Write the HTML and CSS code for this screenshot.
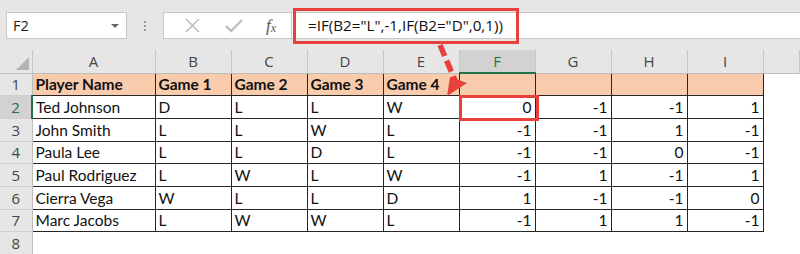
FILE: index.html
```html
<!DOCTYPE html>
<html lang="en">

<head>
    <meta charset="UTF-8">
    <title>IF formula</title>
    <link rel="stylesheet" href="styles.css">
</head>

<body>
    <div class="barra">
        <div class="nome">
            <span>F2</span>
            <span class="seta"></span>
        </div>
        <div class="pontos"><i></i><i></i><i></i></div>
        <div class="icones">
            <svg width="20" height="20" viewBox="0 0 20 20"><path d="M3 3 L16 16 M16 3 L3 16" stroke="#bfbfbf" stroke-width="1.6" fill="none"/></svg>
            <svg width="20" height="20" viewBox="0 0 20 20"><path d="M2 10 L7 15 L18 4" stroke="#bfbfbf" stroke-width="2.4" fill="none"/></svg>
            <span class="fx">f<sub>x</sub></span>
        </div>
        <div class="entrada">=IF(B2="L",-1,IF(B2="D",0,1))</div>
    </div>

    <table class="planilha">
        <tr class="letras">
            <td class="canto"><span></span></td>
            <td>A</td><td>B</td><td>C</td><td>D</td><td>E</td><td class="ativo">F</td><td>G</td><td>H</td><td>I</td><td class="resto"></td>
        </tr>
        <tr class="titulo">
            <td class="num">1</td>
            <td class="b">Player Name</td><td class="b">Game 1</td><td class="b">Game 2</td><td class="b">Game 3</td><td class="b">Game 4</td>
            <td class="b"></td><td class="b"></td><td class="b"></td><td class="b"></td><td class="vazio"></td>
        </tr>
        <tr>
            <td class="num ativo">2</td>
            <td class="b">Ted Johnson</td><td class="b">D</td><td class="b">L</td><td class="b">L</td><td class="b">W</td>
            <td class="b n sel">0</td><td class="b n">-1</td><td class="b n">-1</td><td class="b n">1</td><td class="vazio"></td>
        </tr>
        <tr>
            <td class="num">3</td>
            <td class="b">John Smith</td><td class="b">L</td><td class="b">L</td><td class="b">W</td><td class="b">L</td>
            <td class="b n">-1</td><td class="b n">-1</td><td class="b n">1</td><td class="b n">-1</td><td class="vazio"></td>
        </tr>
        <tr>
            <td class="num">4</td>
            <td class="b">Paula Lee</td><td class="b">L</td><td class="b">L</td><td class="b">D</td><td class="b">L</td>
            <td class="b n">-1</td><td class="b n">-1</td><td class="b n">0</td><td class="b n">-1</td><td class="vazio"></td>
        </tr>
        <tr>
            <td class="num">5</td>
            <td class="b">Paul Rodriguez</td><td class="b">L</td><td class="b">W</td><td class="b">L</td><td class="b">W</td>
            <td class="b n">-1</td><td class="b n">1</td><td class="b n">-1</td><td class="b n">1</td><td class="vazio"></td>
        </tr>
        <tr>
            <td class="num">6</td>
            <td class="b">Cierra Vega</td><td class="b">W</td><td class="b">L</td><td class="b">L</td><td class="b">D</td>
            <td class="b n">1</td><td class="b n">-1</td><td class="b n">-1</td><td class="b n">0</td><td class="vazio"></td>
        </tr>
        <tr>
            <td class="num">7</td>
            <td class="b">Marc Jacobs</td><td class="b">L</td><td class="b">W</td><td class="b">W</td><td class="b">L</td>
            <td class="b n">-1</td><td class="b n">1</td><td class="b n">1</td><td class="b n">-1</td><td class="vazio"></td>
        </tr>
        <tr>
            <td class="num">8</td>
            <td></td><td></td><td></td><td></td><td></td><td></td><td></td><td></td><td></td><td class="vazio"></td>
        </tr>
    </table>

    <!-- marcacoes em vermelho por cima da planilha -->
    <div class="caixa-formula"></div>
    <div class="caixa-celula"></div>
    <svg class="flecha" width="60" height="70" viewBox="0 0 60 70">
        <path d="M18 8 L35 48" stroke="#e8413c" stroke-width="5.5" stroke-dasharray="12 5" fill="none"/>
        <polygon points="25,59 28,40 45,46" fill="#e8413c"/>
    </svg>
</body>

</html>
```

FILE: styles.css
```css
* {
    margin: 0;
    padding: 0;
    box-sizing: border-box;
}

body {
    background-color: #e6e6e6;
    font-family: "Open Sans", sans-serif;
    width: 800px;
    height: 254px;
    overflow: hidden;
    position: relative;
}

/* barra da formula */
.barra {
    display: flex;
    height: 50px;
    padding-top: 12px;
    padding-bottom: 11px;
}

.nome {
    display: flex;
    align-items: center;
    justify-content: space-between;
    width: 121px;
    margin-left: 6px;
    background-color: white;
    border: 1px solid #c8c8c8;
    padding: 0 7px 0 6px;
    font-size: 14.5px;
    color: #222;
}

.seta {
    border-left: 4px solid transparent;
    border-right: 4px solid transparent;
    border-top: 4px solid #666;
}

.pontos {
    width: 36px;
    display: flex;
    flex-direction: column;
    align-items: center;
    justify-content: center;
    gap: 2px;
}

.pontos i {
    width: 2px;
    height: 2px;
    background-color: #9a9a9a;
}

.icones {
    width: 129px;
    display: flex;
    align-items: center;
    justify-content: space-around;
    background-color: white;
    border: 1px solid #c8c8c8;
    padding: 0 4px 0 8px;
}

.fx {
    font-family: "Liberation Serif", serif;
    font-style: italic;
    font-size: 17px;
    color: #555;
}

.fx sub {
    font-size: 12px;
    vertical-align: -1px;
}

.entrada {
    flex: 1;
    background-color: white;
    border-top: 1px solid #c8c8c8;
    border-bottom: 1px solid #c8c8c8;
    padding-left: 16px;
    font-size: 15.2px;
    line-height: 25px;
    color: #111;
}

/* planilha */
.planilha {
    border-collapse: collapse;
    table-layout: fixed;
    width: 800px;
    font-family: Lato, sans-serif;
    font-size: 15.5px;
    color: #111;
}

.planilha td {
    height: 22.7px;
    padding: 0 3px;
    white-space: nowrap;
    overflow: hidden;
    background-color: white;
}

.letras td {
    height: 23px;
    background-color: #e6e6e6;
    text-align: center;
    font-family: "Open Sans", sans-serif;
    font-size: 15px;
    color: #444;
    border-right: 1px solid #c6c6c6;
    border-bottom: 1px solid #bdbdbd;
}

.letras td:nth-child(1) { width: 32px; }
.letras td:nth-child(2) { width: 123px; }
.letras td:nth-child(7) { width: 77px; }
.letras td:nth-child(n+3) { width: 76px; }
.letras td.resto { width: auto; }

.letras td.ativo {
    background-color: #d2d2d2;
    color: #217346;
    border-bottom: 2px solid #217346;
}

.canto {
    position: relative;
}

.canto span {
    position: absolute;
    right: 3px;
    bottom: 3px;
    border-left: 13px solid transparent;
    border-bottom: 13px solid #b4b4b4;
}

.num {
    background-color: #e6e6e6 !important;
    text-align: center;
    font-family: "Open Sans", sans-serif;
    font-size: 15px;
    color: #444;
    border-bottom: 1px solid #d0d0d0;
    border-right: 1px solid #bdbdbd;
}

.num.ativo {
    background-color: #d2d2d2 !important;
    color: #217346;
    border-right: 2px solid #217346;
}

.b {
    border: 1px solid #262626;
}

.titulo .b {
    background-color: #f8cbad;
    font-weight: bold;
}

.n {
    text-align: right;
}

.vazio {
    background-color: white;
}

/* marcacoes */
.caixa-formula {
    position: absolute;
    left: 293px;
    top: 8px;
    width: 226px;
    height: 36px;
    border: 3px solid #e8413c;
}

.caixa-celula {
    position: absolute;
    left: 459px;
    top: 95px;
    width: 80px;
    height: 26px;
    border: 3px solid #e8413c;
}

.flecha {
    position: absolute;
    left: 422px;
    top: 37px;
}
```
